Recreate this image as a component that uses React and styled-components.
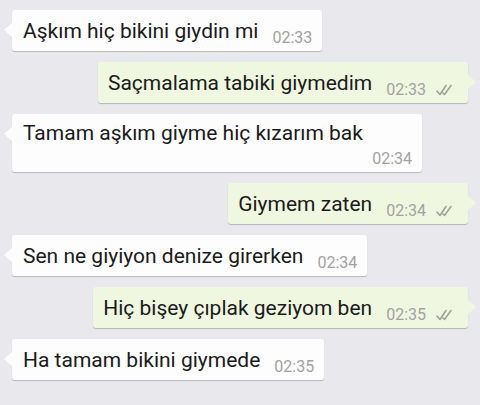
import React from "react";
import styled, { createGlobalStyle } from "styled-components";

const GlobalStyle = createGlobalStyle`
  html, body {
    margin: 0;
    padding: 0;
    background: #e9e9ed;
  }
  body {
    font-family: Roboto, "Noto Sans", "Liberation Sans", sans-serif;
  }
`;

const Chat = styled.div`
  width: 480px;
  height: 405px;
  box-sizing: border-box;
  padding: 10px 12px;
  display: flex;
  flex-direction: column;
  gap: 11px;
  overflow: hidden;
  background: #e9e9ed;
`;

const Row = styled.div`
  display: flex;
  justify-content: ${({ $out }) => ($out ? "flex-end" : "flex-start")};
`;

const Bubble = styled.div`
  position: relative;
  box-sizing: border-box;
  min-height: 41px;
  max-width: 410px;
  ${({ $stacked }) => $stacked && "width: 410px; min-height: 57px;"}
  padding: ${({ $out }) => ($out ? "6px 14px 6px 10px" : "6px 10px 6px 11px")};
  background: ${({ $out }) => ($out ? "#eff7e1" : "#fdfdfd")};
  border-radius: 3px;
  box-shadow: 0 1px 1px rgba(0, 0, 0, 0.22);
  display: flex;
  flex-direction: ${({ $stacked }) => ($stacked ? "column" : "row")};
  align-items: ${({ $stacked }) => ($stacked ? "stretch" : "flex-end")};
  gap: ${({ $stacked }) => ($stacked ? "2px" : "14px")};

  &::before {
    content: "";
    position: absolute;
    top: 13px;
    ${({ $out }) => ($out ? "right: -8px;" : "left: -8px;")}
    width: 0;
    height: 0;
    border-top: 7px solid transparent;
    border-bottom: 7px solid transparent;
    ${({ $out }) =>
      $out ? "border-left: 8px solid #eff7e1;" : "border-right: 8px solid #fdfdfd;"}
  }
`;

const Text = styled.span`
  font-size: 21px;
  line-height: 27px;
  color: #1b1b1b;
  white-space: nowrap;
`;

const Meta = styled.span`
  display: flex;
  align-items: center;
  gap: 10px;
  align-self: flex-end;
  font-size: 16px;
  line-height: 20px;
  color: #a2a2a2;
  white-space: nowrap;
  margin-bottom: -3px;
`;

const Checks = () => (
  <svg width="18" height="12" viewBox="0 0 18 12">
    <path
      d="M1 7 L4 10.5 L10 1.5 M7 9 L8.5 10.5 L15 1.5"
      fill="none"
      stroke="#9ea39a"
      strokeWidth="1.6"
      strokeLinecap="round"
      strokeLinejoin="round"
    />
  </svg>
);

const messages = [
  { text: "Aşkım hiç bikini giydin mi", time: "02:33" },
  { text: "Saçmalama tabiki giymedim", time: "02:33", out: true },
  { text: "Tamam aşkım giyme hiç kızarım bak", time: "02:34", stacked: true },
  { text: "Giymem zaten", time: "02:34", out: true },
  { text: "Sen ne giyiyon denize girerken", time: "02:34" },
  { text: "Hiç bişey çıplak geziyom ben", time: "02:35", out: true },
  { text: "Ha tamam bikini giymede", time: "02:35" },
];

export default function App() {
  return (
    <>
      <GlobalStyle />
      <Chat>
        {messages.map((m, i) => (
          <Row key={i} $out={m.out}>
            <Bubble $out={m.out} $stacked={m.stacked}>
              <Text>{m.text}</Text>
              <Meta>
                {m.time}
                {m.out && <Checks />}
              </Meta>
            </Bubble>
          </Row>
        ))}
      </Chat>
    </>
  );
}
